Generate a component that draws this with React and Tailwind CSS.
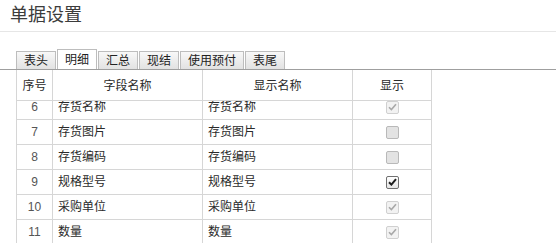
import React from "react";

const rows = [
  { n: 6, f: "存货名称", d: "存货名称", c: "dc" },
  { n: 7, f: "存货图片", d: "存货图片", c: "du" },
  { n: 8, f: "存货编码", d: "存货编码", c: "du" },
  { n: 9, f: "规格型号", d: "规格型号", c: "ec" },
  { n: 10, f: "采购单位", d: "采购单位", c: "dc" },
  { n: 11, f: "数量", d: "数量", c: "dc" },
];

const tabs = ["表头", "明细", "汇总", "现结", "使用预付", "表尾"];

function Check({ kind }) {
  if (kind === "du") {
    return (
      <span className="block w-[13px] h-[13px] rounded-[2px] border border-[#b9b9b9] bg-[#e3e3e3]" />
    );
  }
  const enabled = kind === "ec";
  return (
    <span
      className={
        enabled
          ? "flex items-center justify-center w-[13px] h-[13px] rounded-[2px] border border-[#707070] bg-gradient-to-b from-[#ffffff] to-[#e6e6e6]"
          : "flex items-center justify-center w-[13px] h-[13px] rounded-[2px] border border-[#d0d0d0] bg-[#f2f2f2]"
      }
    >
      <svg width="9" height="8" viewBox="0 0 9 8">
        <path
          d="M1 4.2 L3.4 6.6 L8 1.2"
          fill="none"
          stroke={enabled ? "#1e1e1e" : "#a8a8a8"}
          strokeWidth={enabled ? 2 : 1.6}
        />
      </svg>
    </span>
  );
}

export default function App() {
  const font = "font-['Liberation_Sans','Noto_Sans_CJK_SC',sans-serif]";
  return (
    <div className={`w-[556px] h-[243px] overflow-hidden bg-white ${font}`}>
      <div className="h-[32px] border-b border-[#e6e6e6] pl-[10px] flex items-center text-[18px] text-[#3c3c3c] leading-none pb-[2px]">
        单据设置
      </div>
      <div className="h-[38px] flex items-end gap-px pl-4 border-b border-[#9f9f9f]">
        {tabs.map((t) => {
          const sel = t === "明细";
          return (
            <div
              key={t}
              className={
                sel
                  ? "h-[20px] px-[7px] flex items-center border border-b-0 border-[#bdbdbd] bg-white text-[12px] text-[#222]"
                  : "h-[18px] px-[7px] flex items-center border border-b-0 border-[#bdbdbd] bg-gradient-to-b from-[#f8f8f8] to-[#e2e2e2] text-[12px] text-[#222]"
              }
            >
              {t}
            </div>
          );
        })}
      </div>
      <div className="ml-4 w-[416px] border-l border-[#d6d6d6] text-[12px] text-[#2a2a2a]">
        <div className="grid grid-cols-[36px_150px_150px_79px] h-[31px] border-b border-[#d6d6d6]">
          <div className="border-r border-[#d6d6d6] flex items-center justify-center pt-[1px]">序号</div>
          <div className="border-r border-[#d6d6d6] flex items-center justify-center pt-[1px]">字段名称</div>
          <div className="border-r border-[#d6d6d6] flex items-center justify-center pt-[1px]">显示名称</div>
          <div className="border-r border-[#d6d6d6] flex items-center justify-center pt-[1px]">显示</div>
        </div>
        <div className="h-[143px] overflow-hidden">
          <div className="-mt-[6px]">
            {rows.map((r) => (
              <div
                key={r.n}
                className="grid grid-cols-[36px_150px_150px_79px] h-[25px] border-b border-[#d6d6d6]"
              >
                <div className="border-r border-[#d6d6d6] flex items-center justify-center text-[#555]">{r.n}</div>
                <div className="border-r border-[#d6d6d6] flex items-center pl-[5px]">{r.f}</div>
                <div className="border-r border-[#d6d6d6] flex items-center pl-[5px]">{r.d}</div>
                <div className="border-r border-[#d6d6d6] flex items-center justify-center">
                  <Check kind={r.c} />
                </div>
              </div>
            ))}
          </div>
        </div>
      </div>
    </div>
  );
}
